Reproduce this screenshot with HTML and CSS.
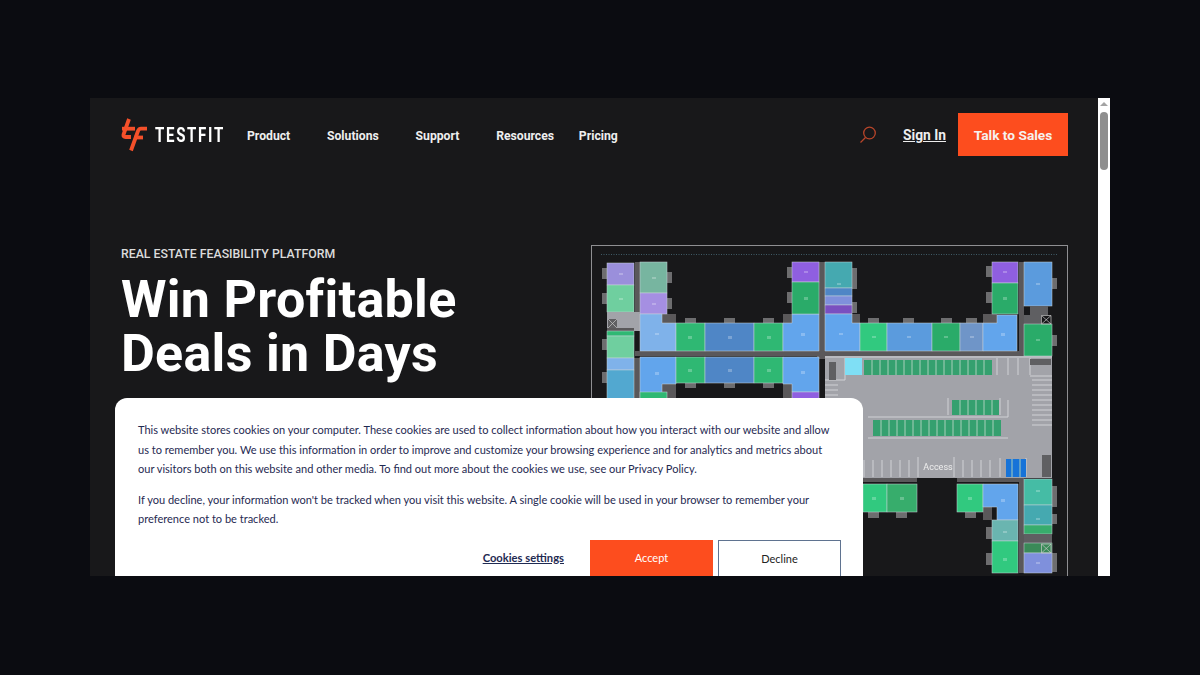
FILE: index.html
```html
<!DOCTYPE html>
<html lang="en">
<head>
    <meta charset="UTF-8">
    <meta name="viewport" content="width=device-width, initial-scale=1.0">
    <title>TestFit - Real Estate Feasibility Platform</title>
    <link rel="stylesheet" href="styles.css">
</head>
<body>
    <div class="frame">
        <div class="page">
            <header class="header">
                <a class="logo" href="#">
                    <svg class="logo-mark" width="28" height="34" viewBox="1 0 28 34">
                        <path class="logo-stroke" d="M9 1 L3.500 16.500 Q3 19 5.500 19 H11"/>
                        <path class="logo-stroke" d="M2 10.700 H15"/>
                        <path class="logo-stroke" d="M27 10.700 H21 Q19 10.700 18 13 L11 32.500"/>
                        <path class="logo-stroke" d="M14.500 19.500 H23"/>
                    </svg>
                    <span class="logo-word">TESTFIT</span>
                </a>
                <nav class="nav">
                    <a class="nav-link" href="#">Product</a>
                    <a class="nav-link" href="#">Solutions</a>
                    <a class="nav-link" href="#">Support</a>
                    <a class="nav-link nav-link-plain" href="#">Resources</a>
                    <a class="nav-link nav-link-plain" href="#">Pricing</a>
                </nav>
                <div class="header-actions">
                    <svg class="search" width="18" height="18" viewBox="0 0 18 18">
                        <circle cx="10.500" cy="7" r="5.800"/>
                        <path d="M6.500 11.500 L1.500 16.500"/>
                    </svg>
                    <a class="sign-in" href="#">Sign In</a>
                    <a class="talk" href="#">Talk to Sales</a>
                </div>
            </header>

            <main class="hero">
                <div class="hero-copy">
                    <p class="eyebrow">REAL ESTATE FEASIBILITY PLATFORM</p>
                    <h1 class="headline">Win Profitable<br>Deals in Days</h1>
                </div>
                <div class="plan">
                    <svg class="plan-svg" width="475" height="340" viewBox="592 246 475 340">
                        <path class="plan-dots" d="M601 254.500 H1057"/>

                        <!-- balconies -->
                        <g class="balcony">
                            <rect x="602" y="268" width="5" height="11"/>
                            <rect x="602" y="293" width="5" height="11"/>
                            <rect x="602" y="339" width="5" height="11"/>
                            <rect x="602" y="372" width="5" height="11"/>
                            <rect x="667" y="272" width="5" height="11"/>
                            <rect x="667" y="298" width="5" height="11"/>
                            <rect x="685" y="318" width="11" height="5"/>
                            <rect x="724" y="318" width="11" height="5"/>
                            <rect x="763" y="318" width="11" height="5"/>
                            <rect x="685" y="383" width="11" height="5"/>
                            <rect x="724" y="383" width="11" height="5"/>
                            <rect x="763" y="383" width="11" height="5"/>
                            <rect x="787" y="267" width="5" height="11"/>
                            <rect x="787" y="292" width="5" height="11"/>
                            <rect x="852" y="268" width="5" height="11"/>
                            <rect x="852" y="279" width="5" height="10"/>
                            <rect x="852" y="302" width="5" height="11"/>
                            <rect x="868" y="318" width="11" height="5"/>
                            <rect x="903" y="318" width="11" height="5"/>
                            <rect x="941" y="318" width="11" height="5"/>
                            <rect x="966" y="318" width="11" height="5"/>
                            <rect x="986" y="266" width="6" height="11"/>
                            <rect x="986" y="292" width="6" height="11"/>
                            <rect x="1052" y="278" width="5" height="11"/>
                            <rect x="1052" y="335" width="5" height="11"/>
                            <rect x="868" y="512" width="11" height="6"/>
                            <rect x="896" y="512" width="11" height="6"/>
                            <rect x="965" y="512" width="11" height="6"/>
                            <rect x="986" y="527" width="6" height="12"/>
                            <rect x="986" y="553" width="6" height="12"/>
                            <rect x="1052" y="486" width="5" height="11"/>
                            <rect x="1052" y="497" width="5" height="10"/>
                            <rect x="1052" y="514" width="5" height="10"/>
                            <rect x="1052" y="553" width="5" height="11"/>
                            <rect x="1052" y="564" width="5" height="8"/>
                        </g>

                        <!-- corridors -->
                        <g class="corridor">
                            <rect x="635" y="262" width="5" height="60"/>
                            <rect x="635" y="351" width="190" height="5"/>
                            <rect x="634" y="358" width="6" height="50"/>
                            <rect x="819" y="262" width="6" height="96"/>
                            <rect x="817" y="347" width="11" height="12"/>
                            <rect x="825" y="351" width="199" height="5"/>
                            <rect x="1019" y="262" width="5" height="94"/>
                            <rect x="863" y="478" width="54" height="4"/>
                            <rect x="957" y="478" width="67" height="4"/>
                            <rect x="1019" y="480" width="5" height="93"/>
                            <rect x="662" y="314" width="14" height="9"/>
                            <rect x="783" y="314" width="9" height="9"/>
                            <rect x="852" y="314" width="8" height="9"/>
                            <rect x="983" y="314" width="14" height="9"/>
                            <rect x="662" y="384" width="14" height="14"/>
                            <rect x="783" y="384" width="9" height="14"/>
                            <rect x="983" y="507" width="9" height="13"/>
                        </g>

                        <!-- parking lot -->
                        <rect class="lot" x="825" y="356" width="227" height="122"/>
                        <g class="lot-lines">
                            <path d="M825 357 H1052 M997 358 V375 M1008 358 V375 M1018 358 V375 M1030 358 V375 M1052 376 H1030"/>
                            <path d="M1032 380 H1052 M1032 385 H1052 M1032 390 H1052 M1032 395 H1052 M1032 400 H1052 M1032 405 H1052 M1032 410 H1052 M1032 415 H1052 M1032 420 H1052 M1032 425 H1052"/>
                            <path d="M864 460 V477 M873 460 V477 M882 460 V477 M891 460 V477 M900 460 V477 M909 460 V477 M918 457 V477 M954 457 V477 M963 460 V477 M972 460 V477 M981 460 V477 M990 460 V477 M1000 458 V477 M1026 458 V477"/>
                            <path d="M868 417 H1008 V400 M948 398 V415 M1000 398 V415 M868 438 H1008"/>
                            <path d="M825 380 H845 V358 M825 385 H838 M825 390 H838 M825 395 H838"/>
                        </g>
                        <rect class="lot-dark" x="829" y="362" width="7" height="18"/>
                        <rect class="stall-cyan" x="845" y="358" width="17" height="17"/>
                        <g class="stalls">
                            <rect x="864" y="360" width="128" height="15"/>
                            <rect x="952" y="400" width="47" height="15"/>
                            <rect x="873" y="420" width="128" height="16"/>
                        </g>
                        <path class="stall-lines" d="M872 360 V375 M880 360 V375 M888 360 V375 M896 360 V375 M904 360 V375 M912 360 V375 M920 360 V375 M928 360 V375 M936 360 V375 M944 360 V375 M952 360 V375 M960 360 V375 M968 360 V375 M976 360 V375 M984 360 V375"/>
                        <path class="stall-lines" d="M960 400 V415 M968 400 V415 M976 400 V415 M984 400 V415 M992 400 V415"/>
                        <path class="stall-lines" d="M881 420 V436 M889 420 V436 M897 420 V436 M905 420 V436 M913 420 V436 M921 420 V436 M929 420 V436 M937 420 V436 M945 420 V436 M953 420 V436 M961 420 V436 M969 420 V436 M977 420 V436 M985 420 V436 M993 420 V436"/>
                        <rect class="stall-blue" x="1006" y="459" width="20" height="18"/>
                        <path class="stall-lines" d="M1012 459 V477 M1020 459 V477"/>
                        <rect class="lot-dark" x="1030" y="359" width="21" height="6"/>
                        <rect class="lot-dark" x="1042" y="455" width="9" height="22"/>
                        <text class="access" x="938" y="470">Access</text>

                        <!-- left wing -->
                        <rect class="room lilac" x="607" y="263" width="27" height="22"/>
                        <rect class="room mint" x="607" y="285" width="27" height="27"/>
                        <rect class="room sage" x="640" y="262" width="27" height="31"/>
                        <rect class="room violet" x="640" y="293" width="27" height="21"/>
                        <rect class="lot" x="607" y="312" width="33" height="19"/>
                        <rect class="lot-dark" x="608" y="319" width="9" height="9"/>
                        <path class="cross" d="M608 319 L617 328 M617 319 L608 328"/>
                        <rect class="corridor-strip" x="607" y="328" width="27" height="3"/>
                        <rect class="room green" x="607" y="331" width="27" height="5"/>
                        <rect class="room mint" x="607" y="336" width="27" height="22"/>
                        <rect class="room sky" x="607" y="358" width="27" height="12"/>
                        <rect class="room ocean" x="607" y="370" width="27" height="40"/>

                        <!-- north bar -->
                        <path class="room sky" d="M640 314 H662 V323 H676 V351 H640 Z"/>
                        <rect class="room green" x="676" y="323" width="29" height="28"/>
                        <rect class="room steel" x="705" y="323" width="49" height="28"/>
                        <rect class="room green" x="754" y="323" width="29" height="28"/>
                        <path class="room blue" d="M783 323 H792 V314 H819 V351 H783 Z"/>
                        <rect class="room purple" x="792" y="262" width="27" height="20"/>
                        <rect class="room jade" x="792" y="282" width="27" height="32"/>

                        <!-- south bar -->
                        <path class="room blue" d="M640 357 H676 V384 H662 V398 H640 Z"/>
                        <rect class="room green" x="676" y="357" width="29" height="26"/>
                        <rect class="room steel" x="705" y="357" width="49" height="26"/>
                        <rect class="room green" x="754" y="357" width="29" height="26"/>
                        <path class="room blue" d="M783 357 H819 V392 H792 V384 H783 Z"/>
                        <rect class="room green" x="640" y="392" width="27" height="16"/>
                        <rect class="room purple" x="792" y="392" width="27" height="16"/>

                        <!-- centre tower -->
                        <rect class="room teal" x="825" y="262" width="27" height="26"/>
                        <rect class="room steel" x="825" y="288" width="27" height="8"/>
                        <rect class="room periwinkle" x="825" y="296" width="27" height="9"/>
                        <rect class="room plum" x="825" y="305" width="27" height="9"/>
                        <path class="room blue" d="M825 314 H852 V323 H860 V351 H825 Z"/>
                        <rect class="room bright" x="860" y="323" width="27" height="28"/>
                        <rect class="room azure" x="887" y="323" width="45" height="28"/>
                        <rect class="room jade" x="932" y="323" width="28" height="28"/>
                        <rect class="room slate" x="960" y="323" width="23" height="28"/>
                        <path class="room blue" d="M983 323 H997 V315 H1017 V351 H983 Z"/>
                        <rect class="room purple" x="992" y="262" width="26" height="21"/>
                        <rect class="room jade" x="992" y="283" width="26" height="31"/>

                        <!-- east wing -->
                        <rect class="room azure" x="1024" y="262" width="28" height="44"/>
                        <rect class="lot-dark" x="1030" y="306" width="18" height="9"/>
                        <rect class="lot-dark" x="1024" y="315" width="17" height="9"/>
                        <rect class="room jade" x="1024" y="324" width="28" height="32"/>
                        <path class="cross" d="M1041.500 315.500 H1051 V324 H1041.500 Z M1041.500 315.500 L1051 324 M1051 315.500 L1041.500 324"/>

                        <!-- bottom wings -->
                        <rect class="room bright" x="863" y="484" width="24" height="28"/>
                        <rect class="room leaf" x="887" y="484" width="30" height="28"/>
                        <rect class="room bright" x="957" y="484" width="26" height="28"/>
                        <path class="room blue" d="M983 484 H1018 V520 H997 V507 H983 Z"/>
                        <rect class="room seafoam" x="992" y="520" width="26" height="21"/>
                        <rect class="room bright" x="992" y="541" width="26" height="32"/>
                        <rect class="room aqua" x="1024" y="479" width="28" height="26"/>
                        <rect class="room teal" x="1024" y="505" width="28" height="20"/>
                        <rect class="room leaf" x="1024" y="525" width="28" height="9"/>
                        <rect class="lot-dark" x="1024" y="534" width="28" height="9"/>
                        <rect class="room forest" x="1024" y="543" width="28" height="10"/>
                        <rect class="room periwinkle" x="1024" y="553" width="28" height="20"/>
                        <path class="cross" d="M1041.500 544 H1051 V553 H1041.500 Z M1041.500 544 L1051 553 M1051 544 L1041.500 553"/>

                        <!-- unit tags -->
                        <g class="tags">
                            <rect x="619" y="273" width="4" height="2"/>
                            <rect x="619" y="298" width="4" height="2"/>
                            <rect x="652" y="277" width="4" height="2"/>
                            <rect x="652" y="303" width="4" height="2"/>
                            <rect x="655" y="333" width="4" height="2"/>
                            <rect x="688" y="336" width="4" height="3"/>
                            <rect x="728" y="336" width="4" height="3"/>
                            <rect x="767" y="336" width="4" height="3"/>
                            <rect x="801" y="333" width="4" height="3"/>
                            <rect x="688" y="369" width="4" height="3"/>
                            <rect x="728" y="369" width="4" height="3"/>
                            <rect x="767" y="369" width="4" height="3"/>
                            <rect x="655" y="372" width="4" height="3"/>
                            <rect x="801" y="371" width="4" height="3"/>
                            <rect x="804" y="271" width="4" height="2"/>
                            <rect x="804" y="297" width="4" height="3"/>
                            <rect x="837" y="283" width="4" height="2"/>
                            <rect x="839" y="333" width="4" height="2"/>
                            <rect x="872" y="336" width="4" height="2"/>
                            <rect x="907" y="336" width="4" height="2"/>
                            <rect x="944" y="336" width="4" height="2"/>
                            <rect x="970" y="336" width="4" height="2"/>
                            <rect x="1001" y="333" width="4" height="3"/>
                            <rect x="1003" y="271" width="4" height="2"/>
                            <rect x="1003" y="297" width="4" height="3"/>
                            <rect x="1036" y="283" width="4" height="2"/>
                            <rect x="1036" y="339" width="4" height="2"/>
                            <rect x="872" y="497" width="4" height="3"/>
                            <rect x="900" y="497" width="4" height="3"/>
                            <rect x="968" y="497" width="4" height="3"/>
                            <rect x="1001" y="499" width="4" height="3"/>
                            <rect x="1003" y="531" width="4" height="2"/>
                            <rect x="1003" y="558" width="4" height="3"/>
                            <rect x="1036" y="490" width="4" height="2"/>
                            <rect x="1036" y="518" width="4" height="2"/>
                            <rect x="1036" y="562" width="4" height="2"/>
                        </g>
                    </svg>
                </div>
            </main>

            <section class="cookie">
                <p class="cookie-text">This website stores cookies on your computer. These cookies are used to collect information about how you interact with our website and allow us to remember you. We use this information in order to improve and customize your browsing experience and for analytics and metrics about our visitors both on this website and other media. To find out more about the cookies we use, see our Privacy Policy.</p>
                <p class="cookie-text">If you decline, your information won't be tracked when you visit this website. A single cookie will be used in your browser to remember your preference not to be tracked.</p>
                <div class="cookie-actions">
                    <a class="cookie-settings" href="#">Cookies settings</a>
                    <button class="btn btn-accept">Accept</button>
                    <button class="btn btn-decline">Decline</button>
                </div>
            </section>
        </div>

        <div class="scrollbar">
            <span class="scroll-arrow"></span>
            <span class="scroll-thumb"></span>
        </div>
    </div>
</body>
</html>
```

FILE: styles.css
```css
* { box-sizing: border-box; }
html, body { height: 100%; }
body { margin: 0; padding-bottom: 1px; background: #0b0c11; display: flex; align-items: center; justify-content: center; font-family: Roboto, Arial, sans-serif; }
a { color: inherit; text-decoration: none; }

.frame { width: 1020px; height: 478px; display: flex; overflow: hidden; }
.page { flex: 1; position: relative; background: #18181a; color: #f2f2f2; overflow: hidden; }

.header { display: flex; align-items: center; padding: 15px 30px 0 31px; }
.logo { display: flex; align-items: center; gap: 6px; width: 126px; flex: none; }
.logo-mark { flex: none; }
.logo-stroke { fill: none; stroke: #f4502a; stroke-width: 3.800; }
.logo-word { flex: none; font-weight: 700; font-size: 19.500px; letter-spacing: 2.200px; color: #fff; transform: scaleX(0.77); transform-origin: left center; padding-top: 1px; }

.nav { display: flex; gap: 24.800px; padding-top: 3px; font-size: 12.200px; font-weight: 700; }
.nav-link { padding-right: 12px; color: #eee; }
.nav-link-plain { padding-right: 0; }

.header-actions { margin-left: auto; display: flex; align-items: center; }
.search { margin-right: 26px; fill: none; stroke: #b8452a; stroke-width: 1.300; }
.sign-in { font-size: 13.800px; font-weight: 700; text-decoration: underline; margin-right: 12px; color: #eee; }
.talk { width: 110px; height: 43px; display: flex; align-items: center; justify-content: center; background: #fd4d1e; color: #f6f1ee; font-size: 13.700px; font-weight: 700; }

.hero { display: flex; justify-content: space-between; padding: 89px 30px 0 31px; }
.hero-copy { padding-top: 1px; }
.eyebrow { margin: 0; font-size: 12.300px; font-weight: 500; line-height: 16px; color: #dcdcdc; }
.headline { margin: 11px 0 0; font-size: 52px; line-height: 54px; font-weight: 700; letter-spacing: 0.300px; color: #fff; }

.plan { width: 477px; height: 340px; border: 1px solid #8f8f92; flex: none; }
.plan-svg { display: block; filter: blur(0.4px); }
.plan-dots { stroke: #3f5a66; stroke-width: 1; stroke-dasharray: 1 1.500; fill: none; }
.balcony rect { fill: #6d6d6f; }
.corridor rect, .corridor-strip { fill: #5a585a; }
.lot { fill: #a2a3a9; }
.lot-dark { fill: #5f5f62; }
.lot-lines path { fill: none; stroke: #d0d1d5; stroke-width: 1; }
.stalls rect { fill: #35a06f; }
.stall-lines { fill: none; stroke: #a9cfbb; stroke-width: 1; }
.stall-cyan { fill: #7fdff5; }
.stall-blue { fill: #1773d8; }
.access { font-family: Roboto, sans-serif; font-size: 9px; fill: #eeeeee; text-anchor: middle; }
.cross { fill: none; stroke: #c9c9c9; stroke-width: 0.700; }
.tags rect { fill: #fff; opacity: 0.25; }

.room { stroke: #c8d3d8; stroke-width: 0.500; }
.lilac { fill: #9a8fdb; }
.mint { fill: #6fcf9f; }
.sage { fill: #77b5a0; }
.violet { fill: #a58fe2; }
.green { fill: #2fb873; }
.jade { fill: #2aab69; }
.bright { fill: #31c97f; }
.leaf { fill: #37ad6c; }
.forest { fill: #3a8a58; }
.sky { fill: #7fb2ea; }
.blue { fill: #62a5ec; }
.azure { fill: #5b9bdd; }
.steel { fill: #4f86c6; }
.slate { fill: #6f95c8; }
.ocean { fill: #52a8d0; }
.purple { fill: #8f5fe0; }
.plum { fill: #7a4fc0; }
.periwinkle { fill: #7f90dc; }
.teal { fill: #45a9b0; }
.aqua { fill: #45bca5; }
.seafoam { fill: #6ab5b0; }

.cookie { position: absolute; left: 25px; top: 300px; width: 748px; height: 230px; background: #fff; border-radius: 12px; padding: 22px 22px 0 23px; font-family: Lato, sans-serif; color: #1f2a52; }
.cookie-text { margin: 0 0 11px; max-width: 698px; font-size: 11.040px; line-height: 19.500px; }
.cookie-actions { display: flex; align-items: flex-start; justify-content: flex-end; margin-top: 11px; }
.cookie-settings { font-size: 11.200px; font-weight: 700; text-decoration: underline; margin: 11px 26px 0 0; }
.btn { width: 123px; height: 36px; font-family: Lato, sans-serif; font-size: 11px; border-radius: 0; }
.btn-accept { background: #fd4d1e; border: 1px solid #fd4d1e; color: #fff; }
.btn-decline { background: #fff; border: 1px solid #5f7390; border-bottom: 0; color: #222; margin-left: 5px; }

.scrollbar { width: 12px; background: #fff; position: relative; flex: none; }
.scroll-arrow { position: absolute; left: 2px; top: 4px; border-left: 4px solid transparent; border-right: 4px solid transparent; border-bottom: 4px solid #a3a3a3; }
.scroll-thumb { position: absolute; left: 2px; top: 14px; width: 8px; height: 58px; border-radius: 4px; background: #8f8f8f; }
```
